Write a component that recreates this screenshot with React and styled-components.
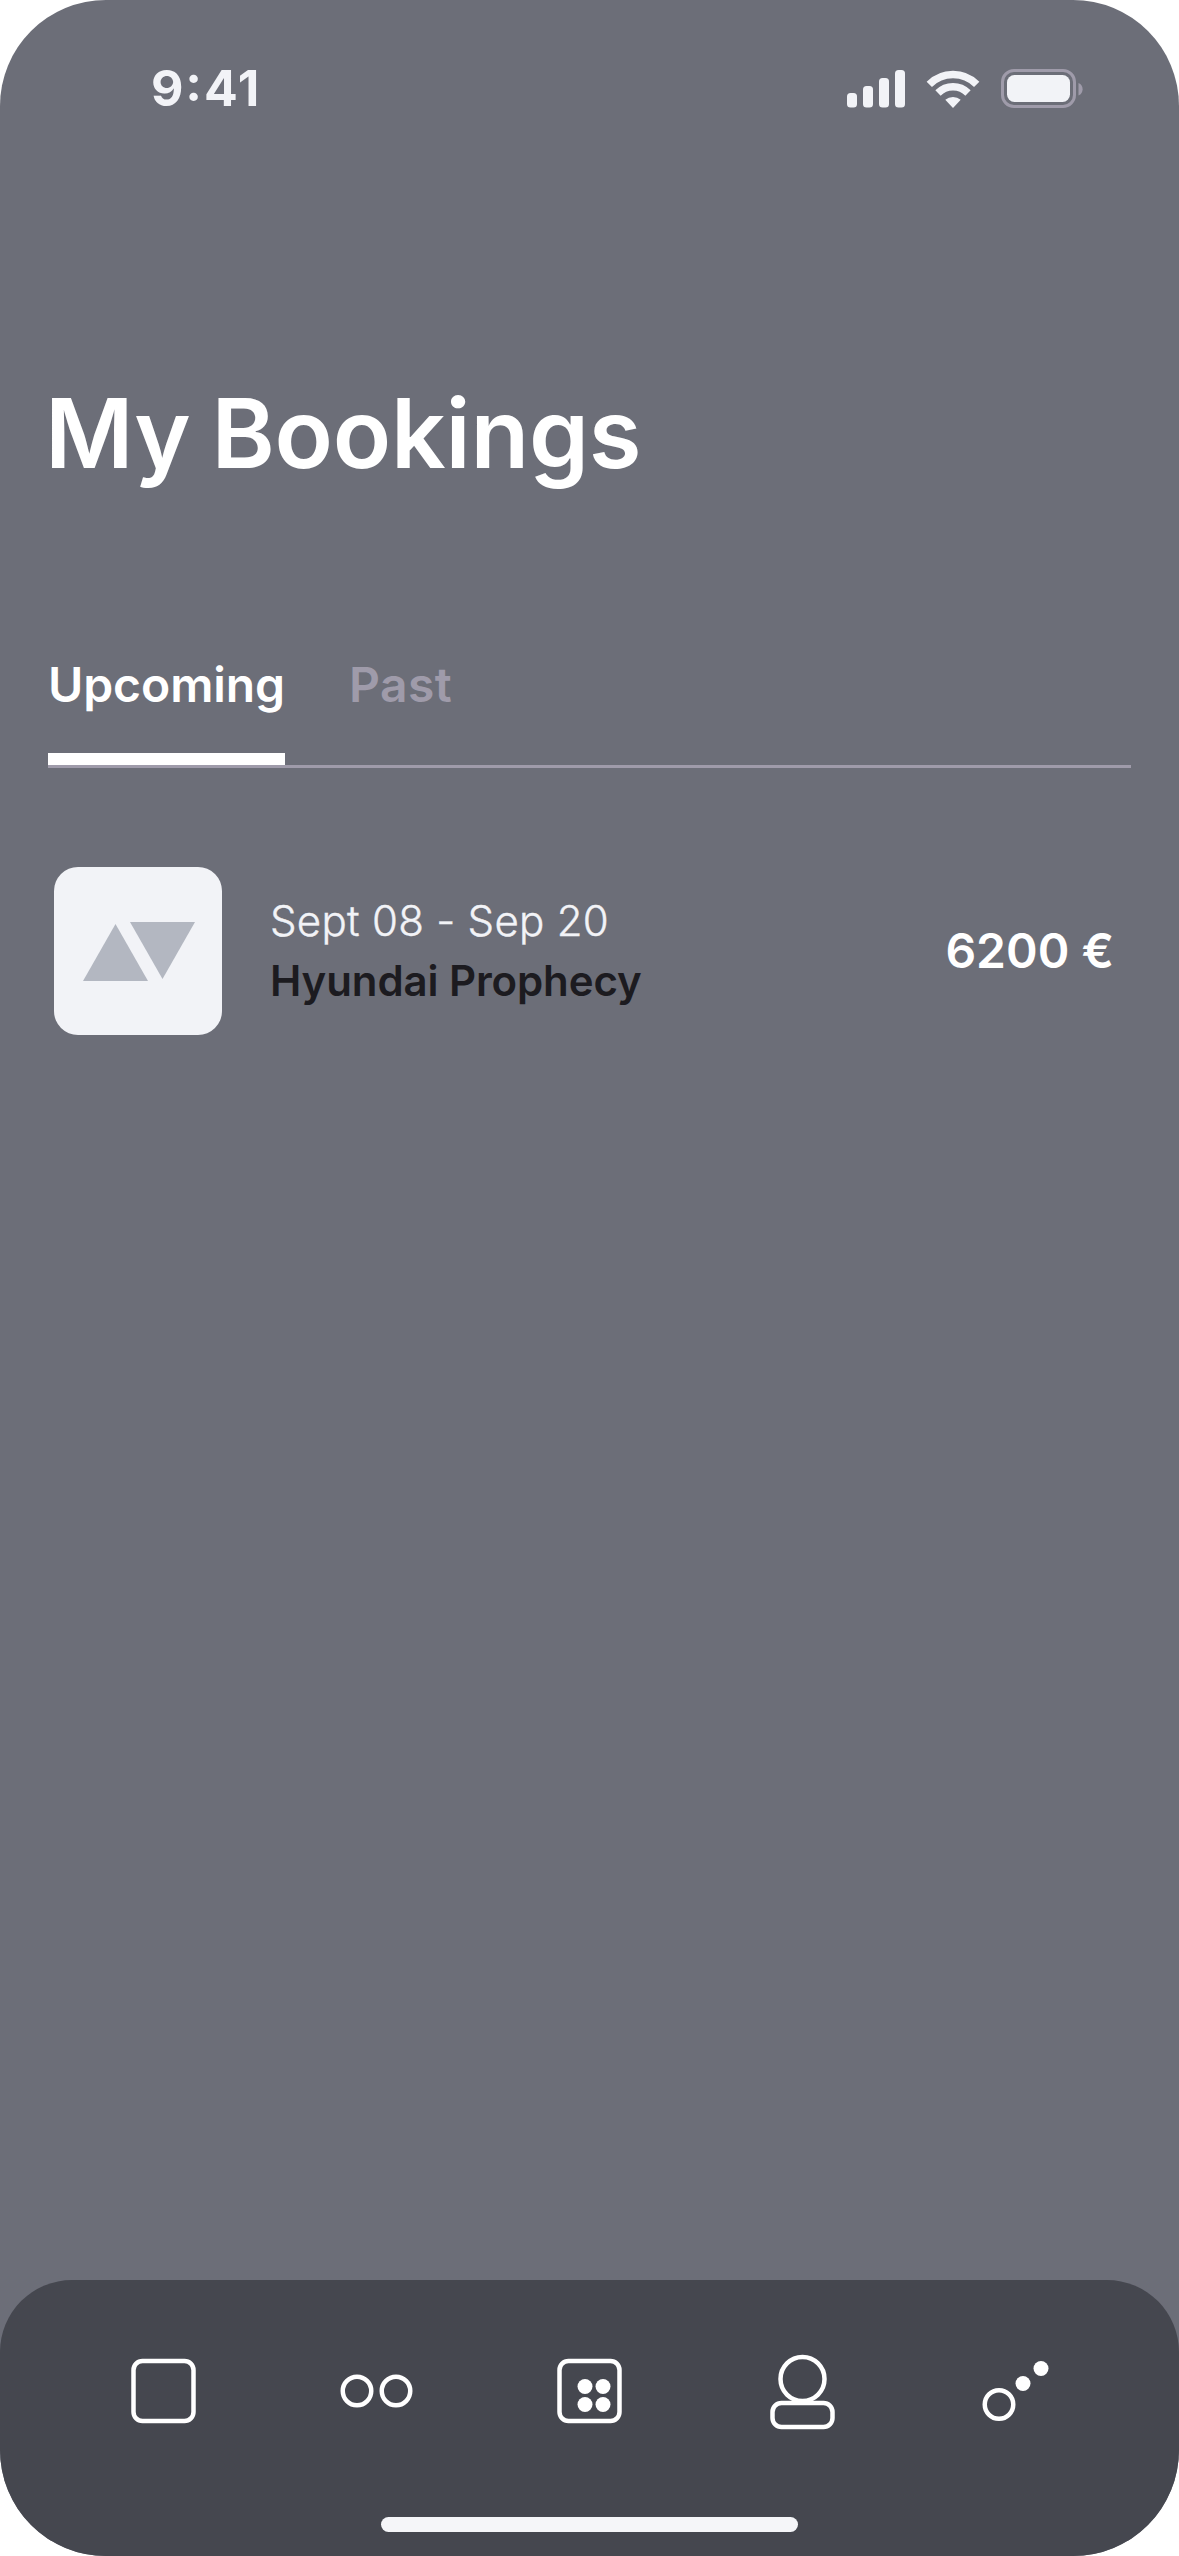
import React from "react";
import styled, { createGlobalStyle } from "styled-components";

const colors = {
  screen: "#6C6E78",
  nav: "#45474F",
  white: "#FFFFFF",
  light: "#F2F3F7",
  muted: "#9F9BAA",
  dark: "#1C1B20",
  shape: "#B3B7C1",
};

const GlobalStyle = createGlobalStyle`
  * { box-sizing: border-box; }
  body { margin: 0; background: #fff; font-family: Inter, "Liberation Sans", sans-serif; }
  svg { display: block; overflow: visible; }
`;

const Screen = styled.main`
  width: 1179px;
  height: 2556px;
  display: flex;
  flex-direction: column;
  background: ${colors.screen};
  border-radius: 106px;
  overflow: hidden;
`;

const StatusBar = styled.header`
  height: 177px;
  padding: 57px 96.5px 0 151px;
  display: flex;
  justify-content: space-between;
  align-items: flex-start;
`;

const Time = styled.time`
  font-size: 50px;
  line-height: 62px;
  font-weight: 700;
  letter-spacing: 1.9px;
  font-feature-settings: "calt" 1;
  color: ${colors.light};
`;

const StatusIcons = styled.div`
  display: flex;
  gap: 22px;
  padding-top: 12px;
`;

const Content = styled.section`
  flex: 1;
  padding: 196px 48px 0;
`;

const Title = styled.h1`
  margin: 0 0 0 -3px;
  font-size: 96px;
  line-height: 120px;
  font-weight: 600;
  letter-spacing: -0.2px;
  word-spacing: -3px;
  color: ${colors.white};
`;

const Tabs = styled.nav`
  margin-top: 162px;
  height: 113px;
  display: flex;
  gap: 64px;
  border-bottom: 3px solid ${colors.muted};
`;

const Tab = styled.button`
  padding: 0;
  border: 0;
  border-bottom: 12px solid ${(p) => (p.$active ? colors.white : "transparent")};
  background: none;
  display: flex;
  align-items: flex-start;
  font: 600 48px/60px Inter, "Liberation Sans", sans-serif;
  letter-spacing: ${(p) => (p.$active ? "-0.08px" : "0.4px")};
  color: ${(p) => (p.$active ? colors.white : colors.muted)};
`;

const Booking = styled.article`
  margin-top: 99px;
  padding: 0 17px 0 6px;
  display: flex;
  align-items: center;
`;

const Thumbnail = styled.div`
  width: 168px;
  height: 168px;
  border-radius: 24px;
  background: ${colors.light};
  display: flex;
  align-items: center;
  justify-content: center;
  padding: 0 0 1px 1px;
`;

const Details = styled.div`
  flex: 1;
  margin-left: 48px;
`;

const Line = styled.p`
  margin: 0;
  font-size: 42px;
  line-height: 60px;
  font-weight: ${(p) => (p.$strong ? 600 : 300)};
  letter-spacing: ${(p) => (p.$strong ? "-0.1px" : "0.28px")};
  -webkit-text-stroke: ${(p) => (p.$strong ? "0" : "0.4px")};
  color: ${(p) => (p.$strong ? colors.dark : colors.light)};
`;

const Price = styled.span`
  font-size: 48px;
  line-height: 60px;
  font-weight: 600;
  color: ${colors.white};
`;

const BottomBar = styled.footer`
  height: 276px;
  padding: 75px 127.5px 24px;
  border-radius: 72px 72px 0 0;
  background: ${colors.nav};
  display: flex;
  flex-direction: column;
  align-items: center;
  justify-content: space-between;
`;

const NavItems = styled.nav`
  width: 100%;
  display: flex;
  justify-content: space-between;
`;

const NavItem = styled.a`
  width: 72px;
  height: 72px;
`;

const HomeIndicator = styled.div`
  width: 417px;
  height: 15px;
  border-radius: 8px;
  background: #f5f6f9;
`;

const NavSvg = ({ children }) => (
  <svg width="72" height="72" viewBox="0.5 0 72 72" fill="none" stroke="#fff" strokeWidth="4.5">
    {children}
  </svg>
);

const Dot = (props) => <circle r="7.5" fill="#fff" stroke="none" {...props} />;

const navIcons = [
  { name: "Home", art: <rect x="6" y="6" width="60" height="60" rx="9" /> },
  {
    name: "Discover",
    art: (
      <>
        <circle cx="16.5" cy="36" r="14.25" />
        <circle cx="55.5" cy="36" r="14.25" />
      </>
    ),
  },
  {
    name: "Bookings",
    art: (
      <>
        <rect x="6" y="6" width="60" height="60" rx="9" />
        <Dot cx="31.5" cy="31.5" />
        <Dot cx="49.5" cy="31.5" />
        <Dot cx="31.5" cy="49.5" />
        <Dot cx="49.5" cy="49.5" />
      </>
    ),
  },
  {
    name: "Profile",
    art: (
      <>
        <circle cx="36" cy="24" r="22" />
        <rect x="6" y="48" width="60" height="24" rx="9" />
      </>
    ),
  },
  {
    name: "More",
    art: (
      <>
        <circle cx="19.5" cy="49.5" r="14.25" />
        <Dot cx="43.5" cy="28.5" />
        <Dot cx="61.5" cy="13.5" />
      </>
    ),
  },
];

const Signal = () => (
  <svg width="58" height="39" viewBox="0 0 58 39" fill={colors.light}>
    <rect x="0" y="24" width="10" height="14.5" rx="3.5" />
    <rect x="16" y="17" width="10" height="21.5" rx="3.5" />
    <rect x="32" y="9" width="10" height="29.5" rx="3.5" />
    <rect x="48" y="1" width="10" height="37.5" rx="3.5" />
  </svg>
);

const Wifi = () => (
  <svg width="52" height="39" viewBox="0 0 52 39" fill="none" stroke={colors.light} strokeWidth="7.5">
    <path d="M2.3 15.3A33.5 33.5 0 0 1 49.7 15.3" />
    <path d="M11 24A21.2 21.2 0 0 1 41 24" />
    <path d="M26 39L18.3 30.7A12 12 0 0 1 33.7 30.7Z" fill={colors.light} stroke="none" />
  </svg>
);

const Battery = () => (
  <svg width="82" height="39" viewBox="0 0 82 39">
    <rect x="1.5" y="1.5" width="72" height="36" rx="11.5" fill="none" stroke={colors.muted} strokeWidth="3" />
    <rect x="6" y="6" width="63" height="27" rx="7.5" fill={colors.light} />
    <path d="M77.5 14V26.5A6.8 6.8 0 0 0 77.5 14Z" fill={colors.muted} />
  </svg>
);

const Triangles = () => (
  <svg width="112" height="60" viewBox="0 0 112 60" fill={colors.shape}>
    <path d="M32.5 3L65 60H0Z" />
    <path d="M47 1H112L79.5 58Z" />
  </svg>
);

export default function App() {
  return (
    <>
      <GlobalStyle />
      <Screen>
        <StatusBar>
          <Time>9:41</Time>
          <StatusIcons>
            <Signal />
            <Wifi />
            <Battery />
          </StatusIcons>
        </StatusBar>
        <Content>
          <Title>My Bookings</Title>
          <Tabs>
            <Tab $active>Upcoming</Tab>
            <Tab>Past</Tab>
          </Tabs>
          <Booking>
            <Thumbnail>
              <Triangles />
            </Thumbnail>
            <Details>
              <Line>Sept 08 - Sep 20</Line>
              <Line $strong>Hyundai Prophecy</Line>
            </Details>
            <Price>6200 €</Price>
          </Booking>
        </Content>
        <BottomBar>
          <NavItems>
            {navIcons.map(({ name, art }) => (
              <NavItem key={name} aria-label={name}>
                <NavSvg>{art}</NavSvg>
              </NavItem>
            ))}
          </NavItems>
          <HomeIndicator />
        </BottomBar>
      </Screen>
    </>
  );
}
